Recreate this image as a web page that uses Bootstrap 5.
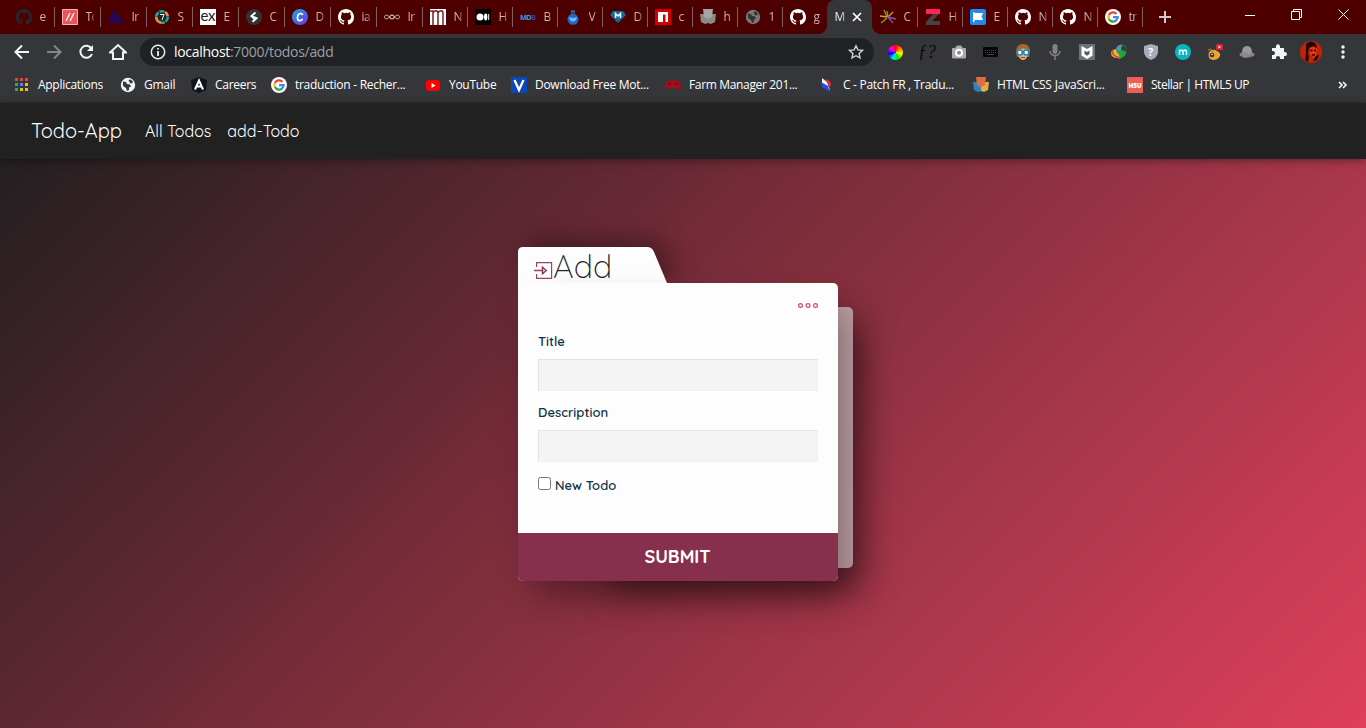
<!DOCTYPE html>
<html lang="en">
<head>
<meta charset="utf-8">
<meta name="viewport" content="width=device-width, initial-scale=1">
<title>My Todos</title>
<link href="https://cdn.jsdelivr.net/npm/bootstrap@5.3.0/dist/css/bootstrap.min.css" rel="stylesheet">
<style>
body{height:728px;overflow:hidden;font-family:"Open Sans","Noto Sans",sans-serif;background:#222}
svg{display:block;flex:none}
/* tab strip */
.strip{height:34px;background:#4d0000;padding-left:8px;color:#c9b4b4;font-size:12px}
.tabx{width:45px;height:34px;padding-left:8px;gap:8px;position:relative;flex:none}
.tabx.wide{width:46px}
.tabx::after{content:"";width:1px;height:20px;background:#806060;position:absolute;right:-1px;top:7px}
.tabx.quiet::after{display:none}
.tabx span{width:8px;overflow:hidden;white-space:nowrap;line-height:18px;letter-spacing:-.5px;margin-left:-.5px;-webkit-mask:linear-gradient(90deg,#000 60%,rgba(0,0,0,.35))}
.tabon{background:#35363a;border-radius:8px 8px 0 0;color:#fff;gap:6px}
.tabon span{width:11px;color:#e8eaed}
.tabon i{position:absolute;bottom:0;width:8px;height:8px}
.tabon .lf{left:-8px;background:radial-gradient(circle at 0 0,transparent 7.5px,#35363a 8px)}
.tabon .rt{right:-8px;background:radial-gradient(circle at 100% 0,transparent 7.5px,#35363a 8px)}
/* toolbar */
.tools{height:36px;background:#35363a;padding-left:6px}
.tools>.slot{width:32px;height:32px;flex:none}
.omni{width:734px;height:28px;border-radius:14px;background:#202124;margin:0 5px 0 6px;padding:0 10px;font-size:14px;color:#9aa0a6}
.omni b{font-weight:400;color:#fff}
.omni .url{letter-spacing:-.3px;line-height:20px}
/* bookmarks */
.marks{height:33px;background:#35363a;border-bottom:1px solid #2c2d30;padding-left:14px;display:grid;grid-template-columns:106px 71px 80px 154px 86px 154px 154px 154px 154px 211px 20px;align-items:center;font-size:12px;color:#fff}
.marks>div{display:flex;align-items:center;gap:8px;height:28px;margin-top:-3px;white-space:nowrap;letter-spacing:-.28px}
/* page */
.page{height:625px;background:linear-gradient(135deg,#231f20,#692936 36%,#722b37 39%,#a8374a 70%,#df3f5a) 0 56px/1366px 569px no-repeat;font-family:Quicksand,Lato,sans-serif}
.topbar{height:56px;background:#212121;padding:0 32px 0 31px;box-shadow:0 2px 8px rgba(0,0,0,.35);color:#fff}
.topbar .brand{font-size:20px;width:114px;line-height:30px;font-weight:400}
.topbar .lk{font-size:16px;color:#fff;text-decoration:none}
.folder{width:320px;margin:88px auto 0;transform:translateX(-5px);position:relative;z-index:0}
.shell{width:320px;height:298px;border-radius:0 5px 5px 5px;background:#fdfdfd;box-shadow:10px 20px 34px -6px rgba(0,0,0,.38)}
.flap{height:36px;padding-left:16px;position:relative}
.flap .shape{position:absolute;left:0;top:0;z-index:-1;filter:drop-shadow(10px -6px 12px rgba(0,0,0,.36));overflow:visible}
.flap h1{font:300 32px/36px Quicksand,Lato,sans-serif;margin:1px 0 0;color:#212529}
.backing{position:absolute;z-index:-2;left:85px;right:-15px;top:60px;height:261px;border-radius:5px;background:#bf9fa4;box-shadow:8px 20px 36px rgba(0,0,0,.52)}
.inner{height:250px;padding:20px 20px 0;position:relative}
.inner label{font-size:13px;font-weight:600;color:#11314a;line-height:18px;display:block;position:relative;top:-1px}
.inner .fld{width:280px;height:32px;background:#f4f4f4;border:1px solid #e3e3e3;border-right-color:#f1f1f1;border-bottom-color:#f1f1f1;border-radius:0;padding:0 8px;display:block}
.tick{width:13px;height:13px;margin:0;accent-color:#87304d}
.send{width:320px;height:48px;border:0;border-radius:0 0 5px 5px;background:#87304d;color:#fff;font-size:18px;font-weight:700;padding:0 1px 2px 0}
</style>
</head>
<body>
<svg width="0" height="0" class="position-absolute">
<symbol id="gh" viewBox="0 0 16 16"><path fill="currentColor" d="M8 0C3.58 0 0 3.58 0 8c0 3.54 2.29 6.53 5.47 7.59.4.07.55-.17.55-.38 0-.19-.01-.82-.01-1.49-2.01.37-2.53-.49-2.69-.94-.09-.23-.48-.94-.82-1.13-.28-.15-.68-.52-.01-.53.63-.01 1.08.58 1.23.82.72 1.21 1.87.87 2.33.66.07-.52.28-.87.51-1.07-1.78-.2-3.64-.89-3.64-3.95 0-.87.31-1.59.82-2.15-.08-.2-.36-1.02.08-2.12 0 0 .67-.21 2.2.82a7.4 7.4 0 0 1 4 0c1.53-1.04 2.2-.82 2.2-.82.44 1.1.16 1.92.08 2.12.51.56.82 1.27.82 2.15 0 3.07-1.87 3.75-3.65 3.95.29.25.54.73.54 1.48 0 1.07-.01 1.93-.01 2.2 0 .21.15.46.55.38A8.01 8.01 0 0 0 16 8c0-4.42-3.58-8-8-8z"/></symbol>
<symbol id="goog" viewBox="0 0 16 16"><circle cx="8" cy="8" r="8" fill="#fff"/><g fill="none" stroke-width="2.3"><path stroke="#ea4335" d="M3.9 6A4.6 4.6 0 0 1 11.4 4.9"/><path stroke="#fbbc05" d="M4 10.2A4.6 4.6 0 0 1 3.9 5.9"/><path stroke="#34a853" d="M11.2 11.3A4.6 4.6 0 0 1 3.9 10"/><path stroke="#4285f4" d="M8 8.1h4.6a4.6 4.6 0 0 1-1.5 3.3"/></g></symbol>
<symbol id="globe" viewBox="0 0 16 16"><circle cx="8" cy="8" r="7.2" fill="currentColor"/><path fill="var(--land)" d="M3 4.500l3 .5 1 2 3 .5 1 2-2 1v2.500l-2 1-1-3-3-2zM8.500 3l2-.5 2.500 2-1 2-2-.5z"/></symbol>
</svg>

<header>
<div class="strip d-flex align-items-center">
<div class="tabx wide d-flex align-items-center"><svg width="16" height="16" color="#24292e"><use href="#gh"/></svg><span>e</span></div>
<div class="tabx wide d-flex align-items-center"><svg width="16" height="16"><path fill="#e8555b" stroke="#ffb0b0" d="M.5.5h15v15H.5z"/><path stroke="#fff" stroke-width="1.3" d="M4 12l4-8M8 12l4-8"/></svg><span>To</span></div>
<div class="tabx wide d-flex align-items-center"><svg width="16" height="16"><path fill="#24085c" d="M6 1l3 5-4 6H0zM9 4l6 9H5z"/><path stroke="#24085c" d="M0 14.500h16"/></svg><span>Ir</span></div>
<div class="tabx wide d-flex align-items-center"><svg width="16" height="16"><circle cx="8" cy="8" r="5.800" fill="#222" stroke="#20a39e" stroke-width="2.600" stroke-dasharray="5 1"/><path d="M2.200 8A5.800 5.800 0 0 0 7 13.700M11 3a5.800 5.800 0 0 1 2.700 4" fill="none" stroke="#ef8b3a" stroke-width="2.600"/><path stroke="#fff" fill="none" d="M6 5.500h4l-2 5.500"/></svg><span>S</span></div>
<div class="tabx wide d-flex align-items-center"><svg width="16" height="16"><path fill="#fff" d="M0 0h16v16H0z"/><text x="0.5" y="12" font-size="15" letter-spacing="-.4" font-family="Lato" fill="#222">ex</text></svg><span>E</span></div>
<div class="tabx wide d-flex align-items-center"><svg width="16" height="16"><circle cx="8" cy="8" r="8" fill="#333"/><path fill="none" stroke="#fff" stroke-width="1.900" d="M9.500 3.500L5.500 7l5 2.200-4 3.500M5.500 7l3 3"/></svg><span>C</span></div>
<div class="tabx wide d-flex align-items-center"><svg width="16" height="16"><linearGradient id="cv" x2="1" y2="1"><stop stop-color="#18a9dc"/><stop offset="1" stop-color="#6f32e8"/></linearGradient><circle cx="8" cy="8" r="8" fill="url(#cv)"/><path fill="none" stroke="#fff" stroke-width="1.600" d="M10.600 6C10 3.600 6 4 5.500 8s3 5 5.100 2"/></svg><span>D</span></div>
<div class="tabx wide d-flex align-items-center"><svg width="16" height="16" color="#fff"><use href="#gh"/></svg><span>ia</span></div>
<div class="tabx wide d-flex align-items-center"><svg width="16" height="16" fill="none" stroke="#c9bcb2" stroke-width="1"><path d="M.5 8c0-2.500 3-2.500 5 0s5 2.500 5 0-3-2.500-5 0-5 2.500-5 0zM5.500 8c0-2.500 3-2.500 5 0s5 2.500 5 0-3-2.500-5 0-5 2.500-5 0z"/></svg><span>Ir</span></div>
<div class="tabx d-flex align-items-center"><svg width="16" height="16"><path fill="#fff" d="M0 0h16v16H0z"/><path fill="none" stroke="#7b1e1e" stroke-width="1.500" d="M0 2h3v14M3 4c1-3 5-3 5 0v12M8 4c1-3 5-3 5 0v12"/></svg><span>N</span></div>
<div class="tabx d-flex align-items-center"><svg width="16" height="16"><path d="M0 0h16v16H0z"/><g fill="#fff"><circle cx="5" cy="8" r="3.500"/><ellipse cx="10.700" cy="8" rx="1.700" ry="3.400"/><path d="M13.200 5h1v6h-1z"/></g></svg><span>H</span></div>
<div class="tabx d-flex align-items-center"><svg width="16" height="16"><text x="0" y="11" font-size="7.500" font-weight="700" textLength="16" font-family="Open Sans" fill="#299de8">MD<tspan fill="#4936a0">B</tspan></text></svg><span>B</span></div>
<div class="tabx d-flex align-items-center"><svg width="16" height="16"><path fill="#52627c" d="M6 1h4v5H6z"/><circle cx="8" cy="10.300" r="5.500" fill="#2166c9"/><path fill="#78b9ff" d="M4 8q4 2 8 0l-1 3q-3 3-6 0z"/><path stroke="#222" d="M5 1h6M5 4h6"/></svg><span>V</span></div>
<div class="tabx d-flex align-items-center"><svg width="16" height="16"><path fill="#12699a" d="M3 2h10l3 4-8 8-8-8z"/><path fill="none" stroke="#fff" stroke-width="1.500" d="M5.500 9V4.500L8 7l2.500-2.500V9"/></svg><span>D</span></div>
<div class="tabx d-flex align-items-center"><svg width="16" height="16"><path fill="#d40000" d="M0 0h16v16H0z"/><path fill="#fff" d="M3 3h10v10h-2.500V5.500H8V13H3z"/></svg><span>c</span></div>
<div class="tabx d-flex align-items-center"><svg width="16" height="16"><path fill="#8a8a8a" d="M0 5h16l-1 8-4 2-3-1-3 1-4-2z"/><path fill="#a4a4a4" d="M3 0h10l-1 8-4 2-4-2z"/></svg><span>h</span></div>
<div class="tabx d-flex align-items-center"><svg width="16" height="16" color="#777" style="--land:#333"><use href="#globe"/></svg><span>1</span></div>
<div class="tabx quiet d-flex align-items-center"><svg width="16" height="16" color="#fff"><use href="#gh"/></svg><span>g</span></div>
<div class="tabx tabon quiet d-flex align-items-center"><i class="lf"></i><span>M</span><svg width="10" height="10" stroke="#fff" stroke-width="1.700"><path d="M1 1l8 8M9 1L1 9"/></svg><i class="rt"></i></div>
<div class="tabx d-flex align-items-center"><svg width="16" height="16" fill="none" stroke-width="1.300"><path stroke="#75a832" d="M7 8L4 1M8 8L7 2M7 9l-6 5"/><path stroke="#d99b26" d="M8 8l5-5M7 8L0 7"/><path stroke="#7657a9" d="M8 8l8 2M8 8l5 6"/></svg><span>C</span></div>
<div class="tabx d-flex align-items-center"><svg width="16" height="16"><path fill="#444" d="M9 4h6L7 12h8v4H1v-3z"/><path fill="#ff245f" d="M1 0h14v5H1z"/></svg><span>H</span></div>
<div class="tabx d-flex align-items-center"><svg width="16" height="16"><rect width="16" height="16" rx="2" fill="#218aea"/><path fill="#fff" d="M3 3h1.500v1H13l-1.500 3.500L13 11H4.500v2H3z"/></svg><span>E</span></div>
<div class="tabx d-flex align-items-center"><svg width="16" height="16" color="#fff"><use href="#gh"/></svg><span>N</span></div>
<div class="tabx d-flex align-items-center"><svg width="16" height="16" color="#fff"><use href="#gh"/></svg><span>N</span></div>
<div class="tabx d-flex align-items-center"><svg width="16" height="16"><use href="#goog"/></svg><span>tr</span></div>
<svg width="12" height="12" stroke="#d6c8c8" stroke-width="2" style="margin-left:17px"><path d="M6 0v12M0 6h12"/></svg>
<div class="ms-auto d-flex align-items-center" style="gap:36px;padding-right:17px;margin-bottom:6px"><svg width="10" height="11" stroke="#fff"><path d="M0 6.500h10"/></svg><svg width="11" height="11" fill="none" stroke="#fff"><path d="M.5 2.500h8v8h-8zM2.500 2V.5h8v8H9"/></svg><svg width="11" height="11" stroke="#fff"><path d="M.5.5l10 10M10.500.5L.5 10.500"/></svg></div>
</div>

<div class="tools d-flex align-items-center">
<div class="slot d-grid"><svg class="m-auto" width="16" height="16" fill="none" stroke="#f1f3f4" stroke-width="2"><path d="M15 8H2M8 1.500L1.500 8 8 14.500"/></svg></div>
<div class="slot d-grid"><svg class="m-auto" width="16" height="16" fill="none" stroke="#85868a" stroke-width="2"><path d="M1 8h13M8 1.500L14.500 8 8 14.500"/></svg></div>
<div class="slot d-grid"><svg class="m-auto" width="16" height="16"><path fill="none" stroke="#f1f3f4" stroke-width="2" d="M13.400 4.500A6 6 0 1 0 14 10"/><path fill="#f1f3f4" d="M15 1v6H9z"/></svg></div>
<div class="slot d-grid"><svg class="m-auto" width="18" height="18" fill="none" stroke="#f1f3f4" stroke-width="2"><path d="M1 9.500L9 2l8 7.500h-3V16H4V9.500z"/></svg></div>
<div class="omni d-flex align-items-center"><svg width="16" height="16" fill="none" stroke="#e8eaed" stroke-width="1.500"><circle cx="8" cy="8" r="6.700"/><path stroke-width="1.800" d="M8 7v5M8 4v1.600"/></svg><div class="url ms-2"><b>localhost</b>:7000/todos/add</div><svg class="ms-auto" width="16" height="16" fill="none" stroke="#cfd1d4" stroke-width="1.400"><path d="M8 1.800l1.900 4.100 4.500.5-3.300 3 .9 4.500L8 11.700l-4 2.200.9-4.500-3.300-3 4.500-.5z"/></svg></div>
<div class="slot d-grid"><span class="m-auto rounded-circle" style="width:15px;height:15px;background:conic-gradient(red,#f80,#ff0,#0e0,#0ee,#00f,#f0f,red)"></span></div>
<div class="slot d-grid"><span class="m-auto" style="font:italic 400 18px/20px 'Liberation Serif',serif;color:#0c0c0c">ƒ?</span></div>
<div class="slot d-grid"><svg class="m-auto" width="16" height="16"><path fill="#aaa" d="M1.500 4H4l2-2.500h4L12 4h2.500q.5 0 .5.500v9q0 1-1 1H2q-1 0-1-1v-9z"/><circle cx="8" cy="8.700" r="3" fill="#888" stroke="#fff" stroke-width="2"/></svg></div>
<div class="slot d-grid"><svg class="m-auto" width="16" height="12"><rect y="1" width="15" height="10" rx="1" fill="#080808"/><path stroke="#444" stroke-dasharray="1 1" d="M2 4.500h11M2 6.500h11"/><path stroke="#444" d="M4 8.500h7"/></svg></div>
<div class="slot d-grid"><svg class="m-auto" width="16" height="16"><path fill="#a5682a" d="M1 8q0-8 7-8t7 8l-1 5H2z"/><path fill="#edb06c" d="M3 6q5-3 10 0v5q-2 5-5 5t-5-5z"/><g fill="#fff" stroke="#178bc8" stroke-width="1.600"><circle cx="4.800" cy="8.500" r="2.500"/><circle cx="11.200" cy="8.500" r="2.500"/></g><path stroke="#b33" d="M6 13.500h4"/></svg></div>
<div class="slot d-grid"><svg class="m-auto" width="14" height="16"><rect x="4.500" width="5" height="10" rx="2.500" fill="#828282"/><path fill="none" stroke="#828282" stroke-width="1.500" d="M2 7c0 6 10 6 10 0M7 11v5"/></svg></div>
<div class="slot d-grid"><svg class="m-auto" width="16" height="16"><path fill="#6c7378" d="M0 0h16v16H0z"/><path fill="#fff" d="M2.500 2L8 5l5.500-3v9.500L8 15l-5.500-3.500z"/><path fill="#555c61" d="M5.500 6.500L8 8l2.500-1.500V10L8 11.700 5.500 10z"/></svg></div>
<div class="slot d-grid"><svg class="m-auto" width="17" height="16"><ellipse cx="6" cy="9.500" rx="6" ry="4.500" fill="#e8bd36"/><path fill="none" stroke="#e34f32" stroke-width="2" d="M2 6c-2 4 2 7 7 8"/><circle cx="10.500" cy="6" r="5.500" fill="#5a8fc0"/><path fill="#26461f" d="M11 1q5 1 5 6l-3 2-3-3z"/><path fill="#22a92b" d="M4 5l5 2 5-1-1 4 2 1-6 4-1-5z"/></svg></div>
<div class="slot d-grid"><svg class="m-auto" width="16" height="16"><path fill="#a7abba" d="M8 0l7 2v6q0 5-7 8-7-3-7-8V2z"/><text x="5" y="12" font-size="11" font-weight="700" fill="#fff">?</text></svg></div>
<div class="slot d-grid"><svg class="m-auto" width="16" height="16"><circle cx="8" cy="8" r="8" fill="#09b4bd"/><path fill="none" stroke="#fff" stroke-width="1.400" d="M4.500 11V5.500M4.500 7q3.500-2 3.500 1v3M8 7q3.500-2 3.500 1v3"/></svg></div>
<div class="slot d-grid"><svg class="m-auto" width="16" height="16"><path fill="#f3a12c" d="M2 8q4-4 8-1 4 2 3 5-2 4-7 4-6-1-4-8z"/><circle cx="5" cy="11" r="2.300" fill="#333"/><circle cx="5" cy="10.500" r=".8" fill="#fff"/><path stroke="#b98535" fill="none" d="M1 6l3-1 2 3"/><rect x="9" width="7" height="6" rx="1.500" fill="#df2634"/><path fill="#fff" d="M11.500 1.500v3L14 3z"/></svg></div>
<div class="slot d-grid"><svg class="m-auto" width="16" height="14"><ellipse cx="8" cy="9.500" rx="7.500" ry="3" fill="#858585"/><path fill="#999" d="M3 8q0-7 5-7t5 7q-5 3-10 0z"/><circle cx="6" cy="10" r="2.800" fill="#8a8a8a"/></svg></div>
<div class="slot d-grid"><svg class="m-auto" width="16" height="16"><path fill="#f1f3f4" d="M1 4h4c-1-5 5-5 4 0h4v4c4-1 4 5 0 4v3H9c1-4-5-4-4 0H1v-4c4 1 4-5 0-4z"/></svg></div>
<div class="slot d-grid"><svg class="m-auto" width="22" height="22"><circle cx="11" cy="11" r="11" fill="#c32108"/><path fill="#240504" d="M6 3q5-5 10 0l1 4-4-2-4 2-1 5 1 4-1 5-3-2 1-7z"/><path fill="#e53712" d="M10 7l4-1 3 2-1 7-3 2-3-4z"/><path stroke="#310504" stroke-width="1.400" d="M10 9.500h2.500M14 9.500h2M12 14h3"/><path fill="#280404" d="M16 15l3-1-2 5-4 1z"/></svg></div>
<div class="slot d-grid"><svg class="m-auto" width="4" height="16" fill="#f1f3f4"><circle cx="2" cy="3" r="1.700"/><circle cx="2" cy="8" r="1.700"/><circle cx="2" cy="13" r="1.700"/></svg></div>
</div>

<div class="marks">
<div><svg width="16" height="16"><path fill="#ea4335" d="M1 1h3v3H1zM6 1h3v3H6zM11 1h3v3h-3z"/><path fill="#34a853" d="M1 6h3v3H1zM1 11h3v3H1z"/><path fill="#4285f4" d="M6 6h3v3H6z"/><path fill="#fbbc05" d="M11 6h3v3h-3zM6 11h3v3H6zM11 11h3v3h-3z"/></svg><span>Applications</span></div>
<div><svg width="16" height="16" color="#f1f3f4" style="--land:#35363a"><use href="#globe"/></svg><span>Gmail</span></div>
<div><svg width="16" height="16"><path fill="#10131c" d="M8 0l8 3-1 10-7 3-7-3L0 3z"/><path fill="none" stroke="#fff" stroke-width="2" d="M4 12.500L8 3.500l4 9M5.500 9.500h5"/></svg><span>Careers</span></div>
<div><svg width="16" height="16"><use href="#goog"/></svg><span>traduction - Recher...</span></div>
<div><svg width="16" height="16"><rect x="1" y="3" width="14" height="11" rx="3" fill="#f00"/><path fill="#fff" d="M6.500 6v5l4-2.500z"/></svg><span>YouTube</span></div>
<div><svg width="16" height="16"><path fill="#0c47b7" d="M0 0h16v16H0z"/><path fill="none" stroke="#fff" stroke-width="2.300" d="M3.500 3L8 13l4.500-10"/></svg><span>Download Free Mot...</span></div>
<div><svg width="16" height="16"><path fill="#a00d1b" d="M4 3q4 1 8 0 4 2 4 9 0 3-4-1H4q-4 4-4 1 0-7 4-9z"/><path stroke="#59101a" d="M3 6.500h3M4.500 5v3M10 7h3"/></svg><span style="letter-spacing:-.34px">Farm Manager 201...</span></div>
<div><svg width="16" height="16"><path fill="#eee" d="M3 1l5 4 3 8-8-6z"/><path fill="#234dea" d="M2 5l7 4 2 6-8-5z"/><path fill="#e52a34" d="M6 2q6 1 6 6l-2 3-1-5z"/></svg><span>C - Patch FR , Tradu...</span></div>
<div><svg width="16" height="16"><path fill="#2f83b9" d="M0 5h8v9l-3 1-4-2z"/><path fill="#e5ad43" d="M8 5h8l-1 8-4 2-3-1z"/><path fill="#e16b44" d="M3 0h10l-1 8-4 2-4-2z"/></svg><span style="letter-spacing:-.2px">HTML CSS JavaScri...</span></div>
<div><svg width="16" height="16"><path fill="#ed5e57" d="M0 0h16v16H0z"/><text x="1.500" y="10.500" font-size="6.500" font-weight="800" textLength="13" font-family="Open Sans" fill="#fff">H5U</text></svg><span style="letter-spacing:-.47px">Stellar | HTML5 UP</span></div>
<div><svg width="10" height="8" fill="none" stroke="#fff" stroke-width="1.500"><path d="M1 1l3 3-3 3M5 1l3 3-3 3"/></svg></div>
</div>
</header>

<main class="page">
<nav class="topbar d-flex align-items-center"><span class="brand">Todo-App</span><a class="lk me-3" href="#">All Todos</a><a class="lk" href="#">add-Todo</a></nav>
<form class="folder" onsubmit="return false">
<div class="flap d-flex">
<svg class="shape" width="150" height="38"><path fill="#fdfdfd" d="M0 38V5Q0 0 5 0h124q5 0 7 5l13 31v2z"/></svg>
<svg style="margin-top:15px" width="19" height="18" fill="none" stroke="#9c4360" stroke-width="1.200"><path d="M2.600 5V.6h15v15.800h-15V12"/><path d="M0 8.500h8" stroke-width="1.500"/><path stroke="#87304d" stroke-width="1.400" d="M8.500 5.200v6.600l3.800-3.300z"/></svg>
<h1>Add</h1>
</div>
<div class="shell">
<div class="inner">
<div class="d-flex justify-content-end"><svg width="20" height="5" fill="none" stroke="#d9486a" stroke-width="1.200"><circle cx="2.500" cy="2.500" r="1.900"/><circle cx="10" cy="2.500" r="1.900"/><circle cx="17.500" cy="2.500" r="1.900"/></svg></div>
<label for="t" style="margin-top:25px">Title</label>
<input id="t" class="fld" style="margin-top:8px">
<label for="d" style="margin-top:13px">Description</label>
<input id="d" class="fld" style="margin-top:8px">
<div class="d-flex" style="margin-top:15px"><input id="n" type="checkbox" class="tick"><label for="n" class="ms-1">New Todo</label></div>
</div>
<button class="send d-block">SUBMIT</button>
</div>
<div class="backing"></div>
</form>
</main>
<script src="https://cdn.jsdelivr.net/npm/bootstrap@5.3.0/dist/js/bootstrap.bundle.min.js"></script>
</body>
</html>
